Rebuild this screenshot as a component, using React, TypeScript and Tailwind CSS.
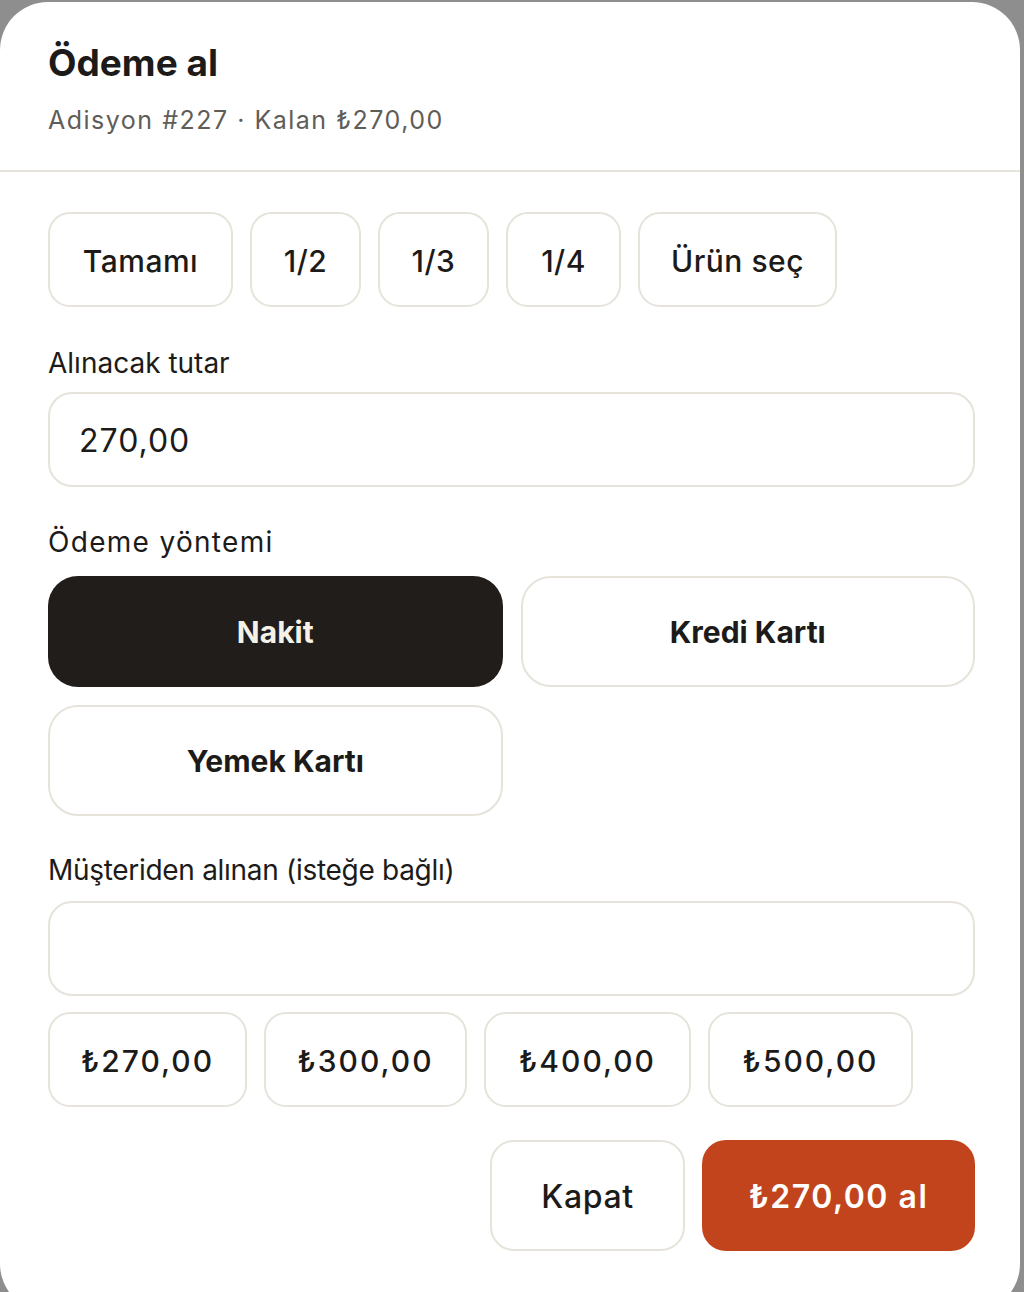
import React, { useState } from 'react';

const font = { fontFamily: 'Inter, "Noto Sans", sans-serif' };

const splits = ['Tamamı', '1/2', '1/3', '1/4', 'Ürün seç'];
const methods = ['Nakit', 'Kredi Kartı', 'Yemek Kartı'];
const quick = ['₺270,00', '₺300,00', '₺400,00', '₺500,00'];

export default function App() {
  const [method, setMethod] = useState('Nakit');
  const [amount, setAmount] = useState('270,00');
  const [received, setReceived] = useState('');

  return (
    <div className="w-[1024px] h-[1292px] bg-[#8e8e8e] overflow-hidden pt-[2px]" style={font}>
      <div className="w-[1020px] h-[1310px] bg-white rounded-[48px]">
        {/* Header */}
        <div className="pl-[48px] pr-[45px] pt-[39px] pb-[34px] border-b-2 border-[#e6e3db]">
          <h2 className="text-[37px] leading-[44px] font-bold text-[#1c1b19]">Ödeme al</h2>
          <p className="mt-[19px] text-[25px] leading-[32px] tracking-[1.5px] text-[#5f5d58]">Adisyon #227 · Kalan ₺270,00</p>
        </div>

        {/* Body */}
        <div className="pl-[48px] pr-[45px] pt-[40px]">
          <div className="flex gap-[17px]">
            {splits.map((s) => (
              <button
                key={s}
                className={`h-[95px] pt-[3px] rounded-[22px] border-2 border-[#e6e3db] bg-white text-[30px] font-medium tracking-[0.5px] text-[#1c1b19] ${
                  s === 'Tamamı' ? 'w-[185px]' : s === 'Ürün seç' ? 'w-[199px]' : s === '1/4' ? 'w-[115px]' : 'w-[111px]'
                }`}
              >
                {s}
              </button>
            ))}
          </div>

          <label className="block mt-[38px] text-[28px] leading-[36px] text-[#1c1b19]">Alınacak tutar</label>
          <input
            value={amount}
            onChange={(e) => setAmount(e.target.value)}
            className="mt-[11px] w-full h-[95px] pt-[2px] rounded-[24px] border-2 border-[#e6e3db] px-[29px] text-[32px] tracking-[1px] text-[#1c1b19] outline-none"
          />

          <label className="block mt-[37px] text-[28px] leading-[36px] tracking-[1.3px] text-[#1c1b19]">Ödeme yöntemi</label>
          <div className="mt-[16px] grid grid-cols-2 gap-[18px]">
            {methods.map((m) => (
              <button
                key={m}
                onClick={() => setMethod(m)}
                className={
                  m === method
                    ? 'h-[111px] pt-[2px] rounded-[30px] bg-[#201d1a] text-[#f6f1e7] text-[30px] font-bold'
                    : 'h-[111px] pt-[2px] rounded-[30px] border-2 border-[#e6e3db] bg-white text-[#1c1b19] text-[30px] font-bold'
                }
              >
                {m}
              </button>
            ))}
          </div>

          <label className="block mt-[36px] text-[28px] leading-[36px] text-[#1c1b19] tracking-[-0.3px]">Müşteriden alınan (isteğe bağlı)</label>
          <input
            value={received}
            onChange={(e) => setReceived(e.target.value)}
            className="mt-[13px] w-full h-[95px] rounded-[24px] border-2 border-[#e6e3db] px-[29px] text-[32px] text-[#1c1b19] outline-none"
          />

          <div className="mt-[16px] flex gap-[17px]">
            {quick.map((q, i) => (
              <button
                key={q}
                className={`h-[95px] pt-[3px] rounded-[22px] border-2 border-[#e6e3db] bg-white text-[30px] font-medium tracking-[2px] text-[#1c1b19] ${
                  ['w-[199px]', 'w-[203px]', 'w-[207px]', 'w-[205px]'][i]
                }`}
              >
                {q}
              </button>
            ))}
          </div>

          <div className="mt-[33px] flex justify-end gap-[17px]">
            <button className="w-[195px] h-[111px] pt-[2px] rounded-[24px] border-2 border-[#e6e3db] bg-white text-[32px] font-medium tracking-[0.6px] text-[#1c1b19]">
              Kapat
            </button>
            <button className="w-[273px] h-[111px] pt-[2px] rounded-[24px] bg-[#c2441c] text-[32px] font-semibold tracking-[1.5px] text-white">
              ₺270,00 al
            </button>
          </div>
        </div>
      </div>
    </div>
  );
}
